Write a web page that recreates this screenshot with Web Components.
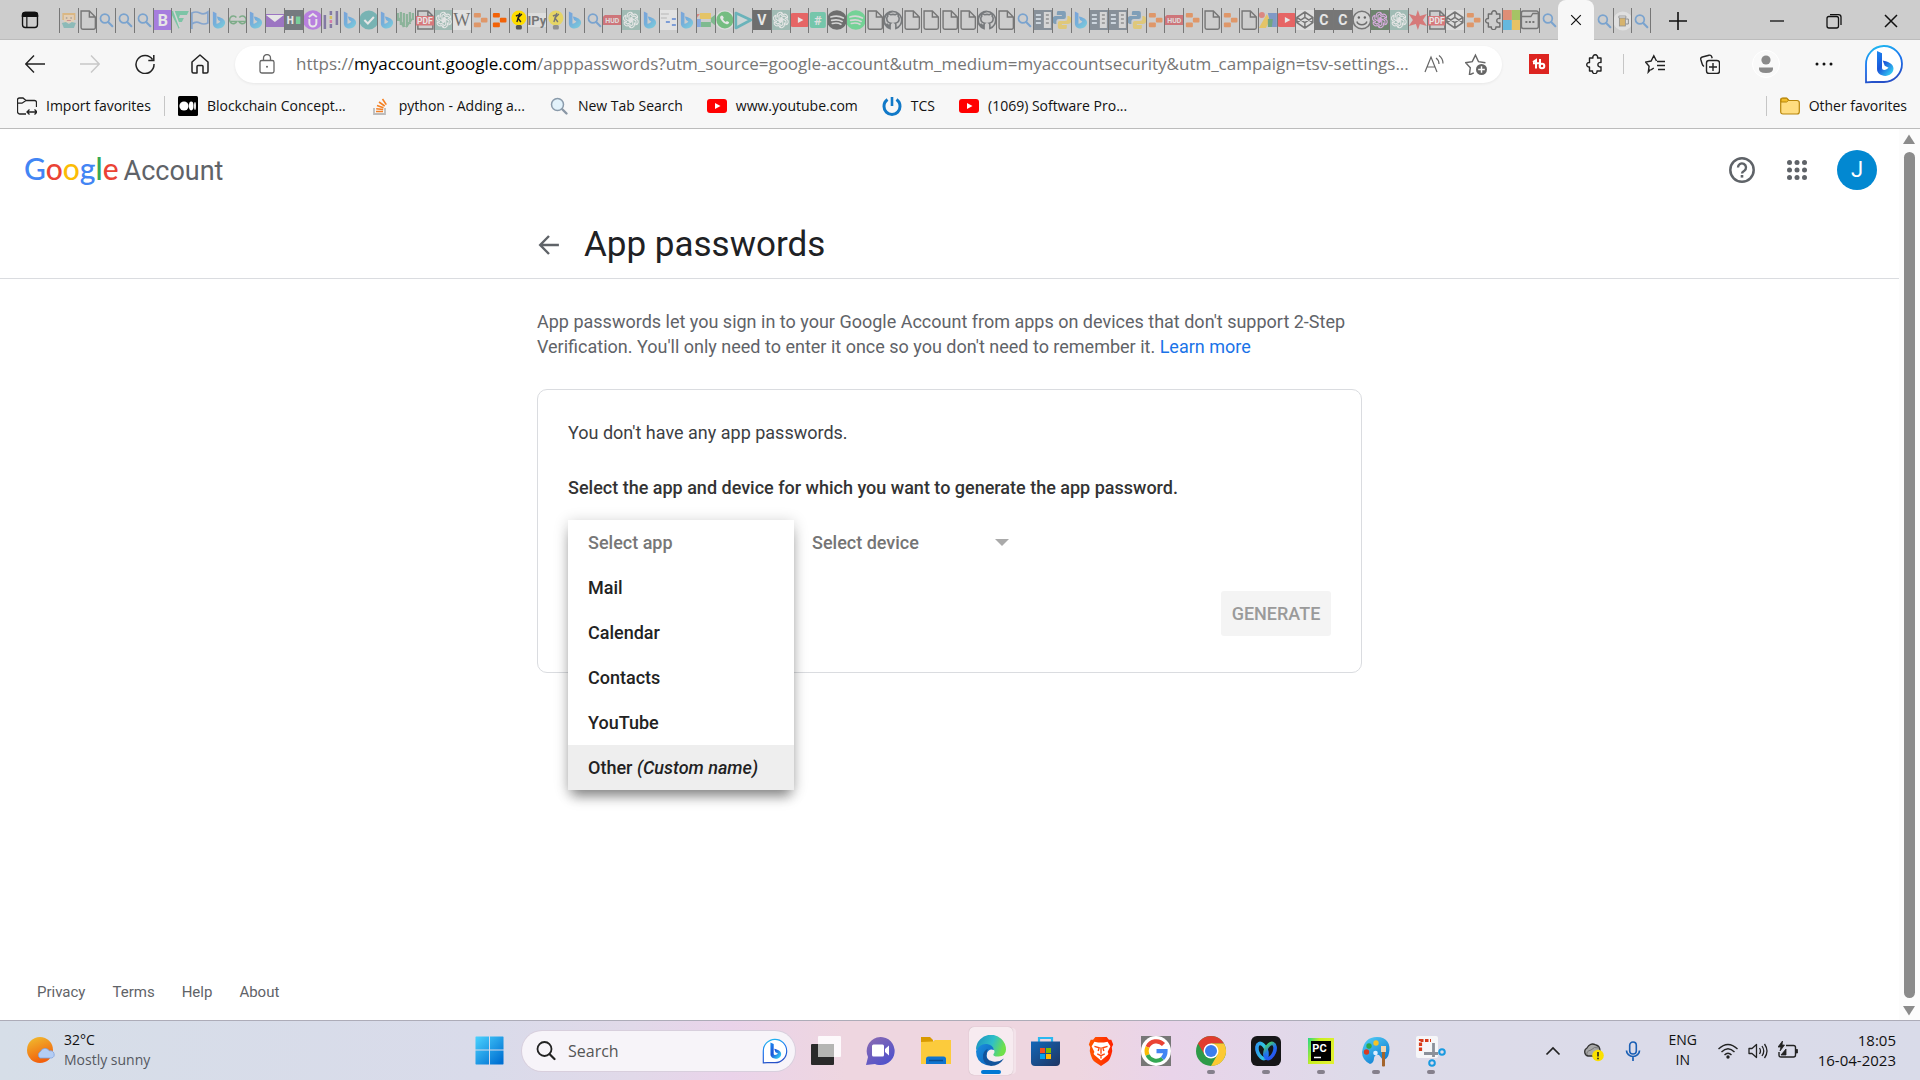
<!DOCTYPE html>
<html lang="en">
<head>
<meta charset="utf-8">
<title>App passwords</title>
<style>
html,body{margin:0;height:100%}
body{font-family:"Open Sans","Noto Sans",sans-serif;color:#111;background:#fff}
</style>
</head>
<body>
<desktop-screen></desktop-screen>
<script>
const rot = (n, cx, cy, s) => Array.from({length: n}, (_, i) => `<g transform="rotate(${i * 360 / n} ${cx} ${cy})">${s}</g>`).join('');
const knot = c => `<g fill="none" stroke="${c}" stroke-width="1.1">${rot(6, 10, 10, '<path d="M6.4 7.6V5.2a3 3 0 0 1 5.2-1.9l-3.5 2v4.6l2 1.2"/>')}</g>`;
const replit = c => `<g fill="${c}"><rect x="3" y="3" width="7" height="4.6" rx="1"/><rect x="10" y="7.8" width="6.6" height="4.6" rx="1"/><rect x="3" y="12.6" width="7" height="4.6" rx="1"/></g>`;
const label = (t, x, y, size, fill, w = 700) => `<text x="${x}" y="${y}" font-family="Roboto,sans-serif" font-size="${size}" font-weight="${w}" fill="${fill}" text-anchor="middle">${t}</text>`;
const bing = '<defs><linearGradient id="b" x2=".6" y2="1"><stop stop-color="#2b7de9"/><stop offset=".55" stop-color="#1f8fe8"/><stop offset="1" stop-color="#28c2ea"/></linearGradient></defs><path fill="url(#b)" d="M4 1.5l3.6 1.800v10.500c1.800-.5 3.200-1.400 3.900-2.400L9.200 9.900 7.900 6.400c4.400.8 8.300 2.700 8.300 6.200 0 3.200-3.100 5.900-6.500 5.900-3.200 0-5.700-2-5.700-5z"/>';
const tube = '<rect x="0" y="3" width="20" height="14" rx="3" fill="#f00"/><path d="M8 7l5.500 3L8 13z" fill="#fff"/>';
const bulb = '<circle cx="10" cy="8" r="7.5" fill="#fd0"/><rect x="7" y="15" width="6" height="4.5" rx="1.5" fill="#555"/><path d="M11 3L8 12M13 4L9 8l3 4M7 6l3-1" stroke="#222" stroke-width="1.4" fill="none"/>';
const spot = c => `<circle cx="10" cy="10" r="9.8" fill="${c}"/><path d="M4 7q7-2 12.500 1M4.800 10.400q6-1.600 10.500 1M5.500 13.500q5-1.300 8.500.8" stroke="#ddd" stroke-width="1.7" fill="none" stroke-linecap="round"/>`;
const bingBubble = '<defs><linearGradient id="r" x2=".3" y2="1"><stop stop-color="#22c4f0"/><stop offset=".5" stop-color="#1976f0"/><stop offset="1" stop-color="#2650c8"/></linearGradient><linearGradient id="c" y2="1" x2=".8"><stop stop-color="#1b8bf2"/><stop offset=".5" stop-color="#1b55d9"/><stop offset="1" stop-color="#35d2f4"/></linearGradient></defs><path d="M2 38.300V20.500A18 18 0 1 1 20 38H8q-3 0-6 .3z" fill="#fff" stroke="url(#r)" stroke-width="1.8"/><path fill="url(#c)" d="M13 7l5 2.300v14.500c0 2.500 2.400 2.800 4.600 1.500l2-1.500-3.900-2-2-5.300c5.600 1.100 10.800 3.500 10.800 8 0 4.300-3.800 7.400-8.200 7.400-4.700 0-8.300-2.700-8.300-6.800z"/>';
const puzzle = '<path d="M6 4h3a2.400 2.400 0 1 1 4.500 0H17v4.500a2.300 2.300 0 1 0 0 4.300V17h-4a2.300 2.300 0 1 1-4.500 0H5.500v-4a2.300 2.300 0 1 1 0-4.500V4z" fill="none" stroke="currentColor" stroke-width="1.4" stroke-linejoin="round"/>';
const mag = '<circle cx="9" cy="8.500" r="4.400" fill="none" stroke="#2a7bd0" stroke-width="1.7"/><path d="M12.300 12l4.200 4.300" stroke="#2a7bd0" stroke-width="2" stroke-linecap="round"/>';

/* name: [viewBox, markup] */
const F = s => ['0 0 20 20', s];
const ICONS = {
 person: F('<rect x="3.5" y="3" width="13" height="7" fill="#e8a33d"/><rect x="5" y="5" width="10" height="7.5" fill="#f7cfa0"/><path d="M7 8h1.500M11.500 8H13" stroke="#444"/><path d="M8 10.500h4" stroke="#c55"/><path d="M3 13l4-1 3 2 3-2 4 1-2 5H5z" fill="#4fa9a4"/>'),
 page: F('<path d="M3.200 1h8.300l6 6v10.500a1.700 1.700 0 0 1-1.700 1.700H4.900a1.700 1.700 0 0 1-1.700-1.700zM11.500 1v6h6" fill="none" stroke="#222" stroke-width="1.4"/>'),
 mag: F(mag),
 boot: F('<rect width="20" height="20" rx="2" fill="#8130f0"/>' + label('B', 10, 15.5, 16, '#fff')),
 green: F('<path d="M1 1h17l-2 4H9l-1 3h5l-2 4H8l1 4-1 3L1 5z" fill="#2dbd80"/><path d="M3 1l6 16" stroke="#ddd" stroke-width="1.5"/>'),
 flag: F('<path d="M2 19V3q4-2 8 0t8-1v11q-4 2-8 0t-8 1" fill="none" stroke="#3f7fd0" stroke-width="1.7"/>'),
 bing: F(bing),
 gfg: F('<path d="M8.500 7.500a3.800 3.800 0 1 0 .5 4H3M11.500 7.500a3.800 3.800 0 1 1-.5 4H17" fill="none" stroke="#2f8d46" stroke-width="1.5"/>'),
 mail: F('<rect x="0" y="4" width="20" height="13" fill="#6c20b8"/><path d="M1 5h18l-9 7z" fill="#fff"/>'),
 he: F('<rect width="20" height="20" fill="#1f2a33"/>' + label('H', 6.5, 14, 10, '#fff', 900) + '<rect x="12" y="6.5" width="4.5" height="7.5" fill="#2ad06a"/>'),
 ude: F('<circle cx="10" cy="10" r="9.8" fill="#a435f0"/><path d="M6.500 9v4a3.500 3.500 0 0 0 7 0V9M6 7l4-3 4 3" fill="none" stroke="#fff" stroke-width="2"/>'),
 bars: F('<path d="M4 5v14M16 1v14M10 1v4M10 14v4" stroke="#3b2a7a" stroke-width="2.5"/><path d="M10 6v3" stroke="#e0b400" stroke-width="2.5"/><path d="M10 10v3" stroke="#e0308a" stroke-width="2.5"/>'),
 check: F('<circle cx="10" cy="10" r="9.5" fill="#259b9a"/><path d="M5.500 10l3.500 3.500L15 7" fill="none" stroke="#fff" stroke-width="2"/>'),
 scrib: F('<path d="M2 3v8M5 2v13M8 3v14M11 4v13M14 2v12M17 3v7M3 8l5 9M10 17l6-8" stroke="#4d9a68" stroke-width="2.2"/>'),
 pdf: F('<path d="M3 1h10l5 5v13H3zM13 1v5h5" fill="none" stroke="#222" stroke-width="1.5"/><rect x="0" y="6" width="20" height="9.5" rx="1" fill="#e2252b"/>' + label('PDF', 10, 14, 8.5, '#fff')),
 ai: F('<rect width="20" height="20" rx="2" fill="#74aa9c"/>' + knot('#fff')),
 aip: F('<rect width="20" height="20" rx="2" fill="#123d12"/>' + knot('#e58af0')),
 wiki: F('<rect width="20" height="20" rx="1" fill="#f5f5f5"/><text x="10" y="15.5" text-anchor="middle" font-family="Liberation Serif,serif" font-size="18" fill="#111">W</text>'),
 repl: F(replit('#f26207')),
 bulb: F(bulb),
 ipy: F('<rect y="3" width="20" height="14" fill="#eee"/>' + label('IPy', 10, 15, 13, '#222')),
 hud: F('<path d="M3 5h17v10H0V8z" fill="#d0202a"/>' + label('HUD', 10.5, 12.8, 7, '#eee')),
 sheet: F('<rect width="20" height="20" fill="#f8f8f8"/><path d="M2 4h8M2 8h6" stroke="#ccc" stroke-width="2"/><path d="M13 9h4M7 12h4M13 15h4" stroke="#2f6fe0" stroke-width="1.8"/>'),
 meet: F('<path d="M0 9V4h4z" fill="#ea4335"/><path d="M4 3h11v6H4z" fill="#fbbc04"/><path d="M0 9h5v8H0z" fill="#4285f4"/><path d="M5 12h10v5H5zM15 8l5-4v12l-5-4z" fill="#34a853"/>'),
 wa: F('<circle cx="10" cy="10" r="9.8" fill="#eee"/><circle cx="10" cy="10" r="8.5" fill="#1faf38"/><path d="M6 6q1-1 2 0l1 2-1 1q1 2 3 3l1-1 2 1q1 1-1 2-3 1-6-3T6 6" fill="#fff"/>'),
 play: F('<path d="M3 3l15 7-15 8z" fill="#cdd" stroke="#0a9aa8" stroke-width="2.6" stroke-linejoin="round"/>'),
 vee: F('<rect width="20" height="20" fill="#111"/>' + label('V', 10, 15, 14, '#fff')),
 tube: F(tube),
 hash: F('<rect x="2" y="2" width="16" height="16" rx="2" fill="#20c08a"/>' + label('#', 10, 15, 13, '#eee')),
 spotd: F(spot('#111')), spotg: F(spot('#1ed760')),
 git: F('<path d="M10 1.500a8.700 8.700 0 0 0-3 16.900V15.500q-2.500.4-3.300-1.800" fill="none" stroke="#24292e" stroke-width="2"/><path d="M10 1.500a8.700 8.700 0 0 1 3 16.900V15q0-1.300-.7-1.800 4-.5 4-4.600 0-1.500-1-2.500.3-1.300-.2-2.400-1.300 0-2.600 1-2.300-.6-4.800 0-1.300-1-2.600-1-.5 1.100-.2 2.400-1 1-1 2.500 0 4.100 4 4.600-.7.500-.7 1.800" fill="none" stroke="#24292e" stroke-width="1.6"/>'),
 news: F('<rect width="20" height="20" fill="#445566"/><rect x="11" y="2" width="7" height="16" fill="#ddd"/><path d="M3 5h5M3 9h5M3 13h5" stroke="#cde" stroke-width="2"/><path d="M13 5h3M13 9h3M13 13h3" stroke="#555" stroke-width="1.5"/>'),
 py: F('<path d="M6 1h6q2 0 2 2v4q0 2-2 2H7q-2.500 0-2.500 2.500V14H3q-3-1-2.500-5Q1 6 4 6h6V5H5V3q0-2 1-2z" fill="#3572a5"/><path d="M14 19H8q-2 0-2-2v-4q0-2 2-2h5q2.500 0 2.500-2.500V6H17q3 1 2.500 5-.5 3-3.500 3h-6v1h5v2q0 2-1 2z" fill="#f2c52a"/>'),
 ads: F('<circle cx="4" cy="5" r="3" fill="#ea4335"/><path d="M9 4l3 6-4 8H1z" fill="#fbbc04"/><path d="M10 3h9v14h-6z" fill="#3566c0"/><path d="M10 9h5l-1 8h-4z" fill="#188038"/>'),
 pen: F('<rect width="20" height="20" fill="#eee"/><path d="M10 2l8 5.300v5.400L10 18l-8-5.300V7.300zM10 2v5.300M10 18v-5.300M2 7.300l8 5.400 8-5.400M2 12.700l8-5.400 8 5.400" fill="none" stroke="#222" stroke-width="1.5" stroke-linejoin="round"/>'),
 cee: F('<rect width="20" height="20" fill="#222"/>' + label('C', 10, 15, 14, '#fff')),
 smile: F('<circle cx="10" cy="10" r="8.8" fill="#ddd" stroke="#222" stroke-width="1.5"/><circle cx="7" cy="7.5" r="1.2"/><circle cx="13" cy="7.5" r="1.2"/><path d="M5 11.500a5.200 4.500 0 0 0 10 0" fill="none" stroke="#111" stroke-width="1.5"/>'),
 star: F('<path d="M10 0l2 6 7-2-4 6 4 6-7-2-2 6-2-6-7 2 4-6-4-6 7 2z" fill="#e02828"/>'),
 puzzle: F(puzzle),
 ms: F('<path d="M0 0h10v10H0z" fill="#f25022"/><path d="M10 0h10v10H10z" fill="#7fba00"/><path d="M0 10h10v10H0z" fill="#00a4ef"/><path d="M10 10h10v10H10z" fill="#ffb900"/>'),
 win: F('<rect x="1.5" y="1" width="17" height="17.5" rx="2" fill="none" stroke="#222" stroke-width="1.5"/><path d="M2 6.500h9l2-3h5" fill="none" stroke="#222" stroke-width="1.3"/><path d="M5.500 12h2M9 12h2M12.500 12h2" stroke="#222" stroke-width="1.8"/>'),
 beer: F('<circle cx="10" cy="10" r="9.5" fill="#f2f2f2"/><rect x="6.5" y="6.5" width="6" height="8.5" fill="#e09a10" stroke="#555" stroke-width=".8"/><path d="M6 5h7v2H6z" fill="#fff" stroke="#555" stroke-width=".8"/><path d="M13 8h2.500v5H13" fill="none" stroke="#555"/>'),
 tabs: F('<rect x="1.7" y="1.7" width="16.6" height="16.6" rx="3" fill="none" stroke="#111" stroke-width="1.5"/><path d="M1.500 6V4.500a3 3 0 0 1 3-3h11a3 3 0 0 1 3 3V6zM6.500 6v12" stroke="#111" stroke-width="1.3" fill="#111"/>'),
 x: F('<path d="M4 4l12 12M16 4L4 16" stroke="currentColor" stroke-width="1.5"/>'),
 plus: F('<path d="M10 1v18M1 10h18" stroke="currentColor" stroke-width="1.6"/>'),
 min: F('<path d="M3 10h14" stroke="#111" stroke-width="1.3"/>'),
 restore: F('<rect x="3" y="5.5" width="11.5" height="11.5" rx="2" fill="none" stroke="#111" stroke-width="1.3"/><path d="M6 3.600h8.500a2.500 2.500 0 0 1 2.500 2.500V14" fill="none" stroke="#111" stroke-width="1.3"/>'),
 back: F('<path d="M20 10H1M9 1.500L.8 10 9 18.500" fill="none" stroke="currentColor" stroke-width="1.4"/>'),
 fwd: F('<path d="M0 10h19M11 1.500l8.200 8.500-8.200 8.500" fill="none" stroke="currentColor" stroke-width="1.4"/>'),
 reload: F('<path d="M17.500 5.500A9 9 0 1 0 19 10M18.800 1v5.500h-5.500" fill="none" stroke="currentColor" stroke-width="1.5"/>'),
 home: F('<path d="M2 8l8-7 8 7v9.500a1.500 1.500 0 0 1-1.500 1.500H13v-6.500a1 1 0 0 0-1-1H8a1 1 0 0 0-1 1V19H3.500A1.500 1.500 0 0 1 2 17.500z" fill="none" stroke="currentColor" stroke-width="1.5" stroke-linejoin="round"/>'),
 lock: F('<rect x="3" y="6.5" width="14" height="12.5" rx="1.8" fill="none" stroke="#666" stroke-width="1.3"/><path d="M6.500 6.500V4a3.500 3.500 0 0 1 7 0v2.500" fill="none" stroke="#666" stroke-width="1.3"/><circle cx="10" cy="12.7" r="1" fill="#666"/>'),
 read: F('<path d="M1 18L7 3l6 15M3 13h8M12 4q3 2 3 6M15 1.500q4 3 4 8" fill="none" stroke="#666" stroke-width="1.2"/>'),
 favadd: F('<path d="M8 18l-4 2 .8-6.500L.6 8.800l6-.9L9.500 2l2.800 5.900 6.300.9" fill="none" stroke="#666" stroke-width="1.3"/><circle cx="15" cy="15" r="5" fill="#666"/><path d="M15 12v6M12 15h6" stroke="#fff" stroke-width="1.3"/>'),
 tb: F('<rect width="20" height="20" fill="#dd2420"/><path d="M4 8l3-2v8.500M4 9.200h6.500M11 5v7.500" stroke="#fff" stroke-width="2" fill="none"/><circle cx="13" cy="12" r="2.3" fill="none" stroke="#fff" stroke-width="2"/>'),
 favlist: F('<path d="M5.500 15.500L3.300 18l.8-5.800L.5 8l5.600-1L8.800 1.800 11.500 7M6 15.800L8.800 14M12 7.500h8M12 11.500h8M13 15.500h7" fill="none" stroke="currentColor" stroke-width="1.4"/>'),
 coll: F('<rect x="6.5" y="6.5" width="13" height="13" rx="2.5" fill="none" stroke="currentColor" stroke-width="1.4"/><path d="M13 9v8M9 13h8M4 12.500Q2.500 11.500 2 9.500L.8 5.500Q.3 3.500 2.300 3L9 1.200q2-.5 2.600 1.300l.6 1.800" fill="none" stroke="currentColor" stroke-width="1.4"/>'),
 user: ['0 0 28 28', '<circle cx="14" cy="14" r="13.5" fill="#f9f9f9" stroke="#fff"/><circle cx="14" cy="10" r="4.6" fill="#8a8a8a"/><path d="M7 17.500h14q.8 5.500-7 5.500t-7-5.500z" fill="#8a8a8a"/>'],
 dots: F('<g fill="#111"><circle cx="3" cy="10" r="1.5"/><circle cx="10" cy="10" r="1.5"/><circle cx="17" cy="10" r="1.5"/></g>'),
 bubble: ['0 0 40 40', bingBubble],
 imp: F('<path d="M9 18H3a2.500 2.500 0 0 1-2.500-2.500V4Q.5 2 2.500 2H6l3 2.500h8.500q2 0 2 2V11M.5 7.200H5L9 4.500M10 16h10M12.500 13.500L10 16l2.500 2.500M17.500 13.500L20 16l-2.500 2.500" fill="none" stroke="#222" stroke-width="1.3"/>'),
 medium: F('<rect width="20" height="20" rx="1.5"/><circle cx="6" cy="10" r="4.6" fill="#fff"/><ellipse cx="13.2" cy="10" rx="2.3" ry="4.4" fill="#fff"/><ellipse cx="17" cy="10" rx=".9" ry="4" fill="#fff"/>'),
 so: F('<path d="M4 12v6h11v-6" fill="none" stroke="#bcbbbb" stroke-width="1.8"/><path d="M6 15.500h7M6.200 12.800l7 .7M7 9.500l6.500 2.200M9 6l5.700 4M12.500 3l3.800 5.600" stroke="#f48024" stroke-width="1.6"/>'),
 newtab: F('<path d="M12.500 12.500l5 5" stroke="#8a97a5" stroke-width="2.4" stroke-linecap="round"/><circle cx="8.5" cy="8.5" r="6" fill="#e2f2fb" stroke="#8a9bab" stroke-width="1.5"/>'),
 tcs: F('<path d="M5.500 3.500A8.200 8.200 0 0 0 2 10.500a8 8 0 0 0 16 0 8.200 8.200 0 0 0-3.500-7" fill="none" stroke="#1179c8" stroke-width="3"/><path d="M10 1v9" stroke="#1179c8" stroke-width="2.6"/>'),
 folder: F('<path d="M.7 4q0-2 2-2h4L9 4.500h8q2.300 0 2.300 2.200v9q0 2.300-2.300 2.300H3q-2.300 0-2.300-2.300z" fill="#ffdd80" stroke="#b8860b" stroke-width="1.2"/><path d="M1 6V4q0-1.700 1.700-1.700H6.500L8.500 4.500 6.500 6z" fill="#f2bd2a" stroke="#b8860b"/>'),
 arrow: F('<path d="M19 10H2.500M10 1.800L2 10l8 8.200" fill="none" stroke="#5f6368" stroke-width="2.2"/>'),
 help: ['0 0 26 26', '<circle cx="13" cy="13" r="11.7" fill="none" stroke="#5f6368" stroke-width="2.5"/><path d="M9 10.500a4 4 0 1 1 6.300 3.200Q13 15 13 16.500" fill="none" stroke="#5f6368" stroke-width="2.4"/><rect x="11.7" y="18" width="2.6" height="2.6" fill="#5f6368"/>'],
 grid: F('<g fill="#5f6368">' + [2.5, 10, 17.5].map(y => [2.5, 10, 17.5].map(x => `<circle cx="${x}" cy="${y}" r="2.5"/>`).join('')).join('') + '</g>'),
 weather: ['0 0 28 28', '<defs><linearGradient id="s" x2=".4" y2="1"><stop stop-color="#f0c030"/><stop offset="1" stop-color="#f2600c"/></linearGradient></defs><circle cx="13" cy="13" r="13" fill="url(#s)"/><path d="M13 21a3.800 3.800 0 0 1 .5-6.500 5 5 0 0 1 9-.5 3.600 3.600 0 0 1 2 7z" fill="#b4cdf4" stroke="#7fa3e0" stroke-width=".8"/>'],
 start: ['0 0 30 30', '<defs><linearGradient id="v" gradientUnits="userSpaceOnUse" x1="0" y1="0" x2="26" y2="28"><stop stop-color="#4cd4ff"/><stop offset="1" stop-color="#0070d2"/></linearGradient></defs><path d="M1 .5h13.500V14H.5V1zM15.500.5H29L29.500 1v13h-14zM.5 15h14v14.500H1L.5 29zM15.500 15h14v14l-.5.5H15.500z" fill="url(#v)"/>'],
 search: F('<circle cx="8.500" cy="8" r="7" fill="none" stroke="#222" stroke-width="1.8"/><path d="M13.500 13l5 5" stroke="#222" stroke-width="2.2" stroke-linecap="round"/>'),
 task: ['0 0 32 32', '<rect x="1" y="9" width="23" height="21" rx="1" fill="#2a2a2a"/><rect x="8" y="1" width="23" height="21" rx="1" fill="#fff" opacity=".85"/><rect x="8" y="9" width="16" height="13" fill="#b5b5b3"/>'],
 chat: ['0 0 32 32', '<defs><linearGradient id="t" y2="1" x2=".7"><stop stop-color="#8d6bb0"/><stop offset="1" stop-color="#4f52cc"/></linearGradient></defs><path d="M1 30l2-8A14 14 0 1 1 15 30q-3 .3-5-1z" fill="url(#t)"/><rect x="7" y="9.500" width="12" height="12" rx="1.5" fill="#fff"/><path d="M20 14l4-3.500v10L20 17z" fill="#fff"/>'],
 files: ['0 0 32 32', '<path d="M1 2h9l3 3v5H1z" fill="#d99a00"/><path d="M1 7l12-.5 2-1.500h16v24H1z" fill="#fccb3c"/><path d="M6 29v-5q0-2.500 2.500-2.500h15Q26 21.500 26 24v5z" fill="#0f74cf"/><path d="M9 25.500h14" stroke="#0a4d8f" stroke-width="1.5"/>'],
 edge: ['0 0 32 32', '<defs><linearGradient id="e" x2="1" y2=".3"><stop stop-color="#1b8fc0"/><stop offset=".6" stop-color="#2fbfc8"/><stop offset="1" stop-color="#6fe04a"/></linearGradient><linearGradient id="f" y2="1"><stop stop-color="#1c8fe0"/><stop offset="1" stop-color="#0a5fb8"/></linearGradient></defs><path d="M1 15A15 15 0 0 1 31 14.500q0 6.500-7.500 7-6 .3-5-2.500 2-2 0-5Q13 7 1 15z" fill="url(#e)"/><path d="M1 16Q5 8 12 9q6 1 7 6-5-2-7 3-2 7 6 11-3 2-7 1Q1 27 1 16z" fill="url(#f)"/><path d="M12 17q-3 8 6 9.500 6 1 11-3Q24 31 16 31 7 29 8 20q1-5 5-6-1 1-1 3z" fill="#12539c"/>'],
 store: ['0 0 32 32', '<defs><linearGradient id="m" y2="1"><stop stop-color="#1267b8"/><stop offset="1" stop-color="#1f3562"/></linearGradient></defs><path d="M9 8V3h13v5" fill="none" stroke="#2ab8f0" stroke-width="2.2"/><path d="M1 6.500h29V27q0 4-4 4H5q-4 0-4-4z" fill="url(#m)"/><path d="M10 13h5v5h-5z" fill="#f25022"/><path d="M16 13h5v5h-5z" fill="#7fba00"/><path d="M10 19h5v5h-5z" fill="#00a4ef"/><path d="M16 19h5v5h-5z" fill="#ffb900"/>'],
 brave: ['0 0 32 32', '<defs><linearGradient id="l" x2="1"><stop stop-color="#ff5a00"/><stop offset="1" stop-color="#ff2000"/></linearGradient></defs><path d="M10 1h12l2.500 3H27l2 5-1.500 3L28 16q-2 10-6 12l-6 4-6-4q-4-2-6-12l.5-4L3 9l2-5h2.500z" fill="url(#l)"/><path d="M9 6l4 1h6l4-1 3 5-3 6q2 2-1 4l-6 5-6-5q-3-2-1-4l-3-6z" fill="#fff"/><path d="M9 11l5 1.500-1 3.500M23 11l-5 1.500 1 3.500M16 12v7M12 19l4 2 4-2M16 21v3" fill="none" stroke="#ff4a10" stroke-width="1.5"/>'],
 goog: ['0 0 32 32', '<rect x="1" y="1" width="30" height="30" fill="#777"/><circle cx="16" cy="16" r="15" fill="#fff"/><g fill="none" stroke-width="4.2"><path d="M23.500 9.500A9.700 9.700 0 0 0 7.500 12" stroke="#ea4335"/><path d="M7.500 12a9.700 9.700 0 0 0 0 8" stroke="#fbbc05"/><path d="M7.500 20a9.700 9.700 0 0 0 15 3.500" stroke="#34a853"/><path d="M22.500 23.500q3-3 3-7.300H16.500" stroke="#4285f4"/></g>'],
 chrome: ['0 0 32 32', '<circle cx="16" cy="16" r="15" fill="#2e9a48"/><path d="M3 8.500A15 15 0 0 1 29 8.500H16L9.500 19.500z" fill="#e03c2e"/><path d="M29 8.500A15 15 0 0 1 16 31L22.500 19.500 16 8.500z" fill="#fcc934"/><circle cx="16" cy="16" r="7.5" fill="#fff"/><circle cx="16" cy="16" r="6" fill="#3b7ded"/>'],
 webex: ['0 0 32 32', '<defs><linearGradient id="x" y2="1"><stop stop-color="#2f8cf0"/><stop offset=".6" stop-color="#30c8e0"/><stop offset="1" stop-color="#1a5cf0"/></linearGradient><linearGradient id="y" y2="1"><stop stop-color="#4ad860"/><stop offset=".5" stop-color="#1f6cf0"/><stop offset="1" stop-color="#2a50f0"/></linearGradient></defs><rect x="1" y="1" width="30" height="30" rx="6" fill="#161618"/><g fill="none" stroke-width="3.6"><ellipse cx="12" cy="16" rx="4.500" ry="8" transform="rotate(-22 12 16)" stroke="url(#x)"/><ellipse cx="20" cy="16" rx="4.500" ry="8" transform="rotate(22 20 16)" stroke="url(#y)"/></g>'],
 pc: ['0 0 32 32', '<defs><linearGradient id="p" x2="1" y2=".4"><stop stop-color="#21d789"/><stop offset=".4" stop-color="#c8ee20"/><stop offset="1" stop-color="#e0f030"/></linearGradient></defs><rect x="3" y="3" width="26" height="26" fill="url(#p)"/><rect x="6" y="6" width="20" height="20"/>' + label('PC', 14.5, 17, 11, '#fff') + '<path d="M9 22.500h7" stroke="#fff" stroke-width="1.5"/>'],
 paint: ['0 0 32 32', '<defs><linearGradient id="a" x2=".7" y2="1"><stop stop-color="#55d2f8"/><stop offset="1" stop-color="#0f7ad0"/></linearGradient></defs><path d="M17 2C27 2 31 9 29 18q-1 6-6 7l-4-5q-4-1-5 3 0 5-4 6-8-4-8-12Q4 2 17 2z" fill="url(#a)"/><circle cx="16" cy="8" r="2.7" fill="#f5c326"/><circle cx="9" cy="11" r="2.7" fill="#2ba84a"/><circle cx="6.5" cy="17" r="2.7" fill="#d83b20"/><circle cx="15.5" cy="18" r="2.3" fill="#def"/><path d="M21 11h5v6h-5z" fill="#f0d5b0"/><path d="M22 17h3v14q-1.500 1-3 0z" fill="#a4652c"/>'],
 snip: ['0 0 32 32', '<rect x="1" y="1" width="22" height="22" rx="2" fill="#f6f6f8"/><path d="M5.500 16V5.500H16" fill="none" stroke="#d83b1a" stroke-width="3.2" stroke-dasharray="3.500 1.500"/><path d="M9 18.500h14M18.500 8v14" stroke="#8b9099" stroke-width="2.8"/><circle cx="27" cy="17" r="2.8" fill="none" stroke="#1a9ae0" stroke-width="2"/><circle cx="17" cy="28" r="2.8" fill="none" stroke="#1a9ae0" stroke-width="2"/>'],
 chev: F('<path d="M3.500 13.500L10 7l6.500 6.500" fill="none" stroke="#222" stroke-width="1.7"/>'),
 cloud: ['0 0 22 22', '<path d="M6 16a4.300 4.300 0 0 1-1-8Q8 2 14 5q4 1 4 6v5z" fill="#a8a8a8" stroke="#333" stroke-width="1.3"/><path d="M5 15q-1-4 4-5 3-4 8-2" stroke="#777" fill="none"/><circle cx="16" cy="15.5" r="5.8" fill="#fbe100"/><path d="M16 12v4.500M16 17.800v1.500" stroke="#222" stroke-width="1.6"/>'],
 mic: F('<rect x="6.7" y="1" width="6.6" height="12" rx="3.3" fill="none" stroke="#1a5fb4" stroke-width="1.6"/><path d="M3.500 9.500a6.500 6 0 0 0 13 0M10 16v4" fill="none" stroke="#1a5fb4" stroke-width="1.7"/>'),
 wifi: F('<g fill="none" stroke="#222" stroke-width="1.4"><path d="M.5 8Q10-1 19.500 8M3.500 11Q10 4.500 16.500 11M6.500 14Q10 10.500 13.500 14"/></g><circle cx="10" cy="16" r="1.7" fill="#222"/>'),
 vol: F('<path d="M1 7.500h3L8.500 3.500v13L4 12.500H1z" fill="none" stroke="#222" stroke-width="1.3" stroke-linejoin="round"/><path d="M11.500 7q2 3 0 6M14 5q3.500 5 0 10M16.500 3q5 7 0 14" fill="none" stroke="#222" stroke-width="1.3"/>'),
 batt: F('<path d="M8 4.500h7.500q2 0 2 2v7.500q0 2-2 2H3q-2 0-2-2V11" fill="none" stroke="#222" stroke-width="1.4"/><path d="M18 8.500h1.500v3.500H18zM3 14L8 8v6zM4.500 0L0 6h3l-1 4 4.500-6H4z" fill="#222" stroke="#222" stroke-width=".8"/>'),
 caret: ['0 0 14 7', '<path d="M0 0h14L7 7z" fill="#aaa"/>'],
 up: ['0 0 12 10', '<path d="M6 .5L12 10H0z" fill="#8b8b8b"/>'],
 down: ['0 0 12 10', '<path d="M6 9.500L12 0H0z" fill="#8b8b8b"/>']
};

const define = (name, html, after) => {
  const t = document.createElement('template');
  t.innerHTML = html;
  customElements.define(name, class extends HTMLElement {
    connectedCallback() {
      if (this.shadowRoot) return;
      const root = this.attachShadow({mode: 'open'});
      root.append(t.content.cloneNode(true));
      if (after) after(this, root);
    }
  });
};

define('ui-icon', `<style>:host{display:block;width:20px;height:20px;flex:none}svg{display:block;width:100%;height:100%}</style><svg aria-hidden="true"></svg>`, (el, root) => {
  const [box, body] = ICONS[el.getAttribute('name')];
  const svg = root.querySelector('svg');
  svg.setAttribute('viewBox', box);
  if (el.hasAttribute('fill')) svg.setAttribute('preserveAspectRatio', 'xMidYMid slice');
  svg.innerHTML = body;
});

define('icon-button', `<style>:host{display:block;flex:none;width:55px}
button{all:unset;display:flex;align-items:center;justify-content:center;width:100%;height:100%;cursor:default}</style>
<button><slot></slot></button>`, (el, root) => root.querySelector('button').setAttribute('aria-label', el.getAttribute('label') || ''));

define('browser-tab', `<style>:host{display:flex;flex:1 1 0;min-width:0;box-sizing:border-box;border-left:1px solid var(--line,#777);height:25px}
button{all:unset;display:flex;align-items:center;flex:1;min-width:0;overflow:hidden;opacity:.5}
:host([awake]) button{opacity:1}
ui-icon{width:100%;height:20px;flex:1}</style><button></button>`, (el, root) => {
  root.querySelector('button').innerHTML = `<ui-icon fill name="${el.getAttribute('icon')}"></ui-icon>`;
});

define('tab-strip', `<style>:host{display:flex;align-items:flex-end;height:40px;background:#cdcdcd;box-sizing:border-box;box-shadow:inset 0 -1px #bcbcbc}
.menu{width:59px;height:40px}
.tabs{display:flex;min-width:0;align-items:center;height:40px}
.before{flex:80}.after{flex:3;border-right:1px solid #777;height:25px;margin-bottom:7px}
.active{all:unset;width:36px;height:40px;background:#f7f7f7;border-radius:8px 8px 0 0;display:flex;align-items:center;justify-content:center}
.active ui-icon{width:16px;height:16px}
.new{width:53px;height:38px}.gap{width:44px}.win{display:flex;height:38px;margin-right:1px}
.win icon-button{width:57px}
.after browser-tab:first-child{--line:transparent}</style>
<icon-button class="menu" label="Tab actions"><ui-icon name="tabs" style="width:18px;height:18px"></ui-icon></icon-button>
<div class="tabs before"></div>
<button class="active" aria-label="Close tab"><ui-icon name="x"></ui-icon></button>
<div class="tabs after"><browser-tab icon="mag"></browser-tab><browser-tab icon="beer"></browser-tab><browser-tab icon="mag"></browser-tab></div>
<icon-button class="new" label="New tab"><ui-icon name="plus"></ui-icon></icon-button>
<div class="gap"></div>
<div class="win"><icon-button label="Minimize"><ui-icon name="min"></ui-icon></icon-button><icon-button label="Restore"><ui-icon name="restore"></ui-icon></icon-button><icon-button label="Close"><ui-icon name="x"></ui-icon></icon-button></div>`, (el, root) => {
  const names = 'person page mag mag mag boot green flag bing gfg bing mail he ude bars bing check bing scrib pdf ai wiki repl repl! bulb! ipy bulb bing mag hud ai bing sheet bing meet wa play vee ai tube hash spotd spotg page git page page page page git page mag news py bing news news py repl hud repl page repl page ads tube pen cee cee smile aip ai star pdf pen repl puzzle ms win mag'.split(' ');
  root.querySelector('.before').innerHTML = names.map(n => `<browser-tab icon="${n.replace('!', '')}"${n.endsWith('!') ? ' awake' : ''}></browser-tab>`).join('');
});

define('tool-bar', `<style>:host{display:flex;align-items:center;height:48px;padding:0 5px 0 7px;background:#f7f7f7}
icon-button{height:40px;color:#222}.off{color:#c8c8c8}.wide{width:58px}.last{width:62px}
.address{flex:1;min-width:0;margin:0 9px 0 8px;height:37px;border-radius:19px;background:#fff;box-shadow:0 1px 3px #0001;display:flex;align-items:center;padding:0 5px 0 22px;box-sizing:border-box}
.url{flex:1;min-width:0;margin-left:19px;white-space:nowrap;font-size:17px;line-height:24px;color:#767676;outline:0}
.url b{font-weight:400;color:#000}
.tools{display:flex}.tools icon-button{width:42px}
.rule{width:1px;height:20px;background:#c6c6c6;margin:0 3px 0 2px}</style>
<icon-button label="Back"><ui-icon name="back"></ui-icon></icon-button>
<icon-button label="Forward" class="off"><ui-icon name="fwd"></ui-icon></icon-button>
<icon-button label="Refresh"><ui-icon name="reload"></ui-icon></icon-button>
<icon-button label="Home"><ui-icon name="home"></ui-icon></icon-button>
<div class="address"><ui-icon name="lock"></ui-icon>
<div class="url" role="textbox" aria-label="Address" contenteditable="true" spellcheck="false">https://<b>myaccount.google.com</b>/apppasswords?utm_source=google-account&amp;utm_medium=myaccountsecurity&amp;utm_campaign=tsv-settings...</div>
<div class="tools"><icon-button label="Read aloud"><ui-icon name="read"></ui-icon></icon-button><icon-button label="Add to favorites"><ui-icon name="favadd" style="width:22px;height:22px"></ui-icon></icon-button></div></div>
<icon-button label="Extension"><ui-icon name="tb"></ui-icon></icon-button>
<icon-button label="Extensions"><ui-icon name="puzzle"></ui-icon></icon-button>
<div class="rule"></div>
<icon-button label="Favorites"><ui-icon name="favlist"></ui-icon></icon-button>
<icon-button label="Collections"><ui-icon name="coll"></ui-icon></icon-button>
<icon-button class="wide" label="Profile"><ui-icon name="user" style="width:28px;height:28px"></ui-icon></icon-button>
<icon-button class="wide" label="Settings and more"><ui-icon name="dots"></ui-icon></icon-button>
<icon-button class="last" label="Bing"><ui-icon name="bubble" style="width:40px;height:40px"></ui-icon></icon-button>`);

define('favorite-link', `<style>:host{display:block;flex:none}a{display:flex;align-items:center;gap:9px;color:#111;text-decoration:none;font-size:14px;line-height:20px;white-space:nowrap}</style>
<a href="#"><slot></slot></a>`, (el, root) => {
  const icon = document.createElement('ui-icon');
  icon.setAttribute('name', el.getAttribute('icon'));
  root.querySelector('a').prepend(icon);
});

define('favorites-bar', `<style>:host{display:flex;align-items:center;height:41px;padding:0 13px 4px 17px;background:#f7f7f7;border-bottom:1px solid #bcbcbc;gap:24px;box-sizing:border-box}
.rule{width:1px;height:20px;background:#c6c6c6;margin:0 -11px}.grow{flex:1}</style>
<favorite-link icon="imp">Import favorites</favorite-link><div class="rule"></div>
<favorite-link icon="medium">Blockchain Concept...</favorite-link>
<favorite-link icon="so">python - Adding a...</favorite-link>
<favorite-link icon="newtab">New Tab Search</favorite-link>
<favorite-link icon="tube">www.youtube.com</favorite-link>
<favorite-link icon="tcs">TCS</favorite-link>
<favorite-link icon="tube">(1069) Software Pro...</favorite-link>
<div class="grow"></div><div class="rule"></div>
<favorite-link icon="folder">Other favorites</favorite-link>`);

define('account-header', `<style>:host{display:block;border-bottom:1px solid #dadce0}
.top{display:flex;align-items:center;height:81px;padding:0 22px 0 24px}
.logo{display:flex;align-items:baseline;gap:5px;text-decoration:none;font:27px/36px Roboto,sans-serif;color:#5f6368;flex:1}
.g{font:500 30px/36px Lato,sans-serif}
.b{color:#4285f4}.r{color:#ea4335}.y{color:#fbbc05}.n{color:#34a853}
.avatar{all:unset;width:40px;height:40px;border-radius:50%;background:#0288d1;color:#fff;font:22px/40px Roboto,sans-serif;text-align:center;margin-left:13px}
.title{display:flex;align-items:center;gap:23px;max-width:825px;height:68px;margin:0 auto;padding-top:2px;box-sizing:border-box}
.title icon-button{width:24px;height:24px}
h1{margin:0;font:400 35px/44px Roboto,sans-serif;color:#202124}</style>
<div class="top"><a class="logo" href="#"><span class="g"><span class="b">G</span><span class="r">o</span><span class="y">o</span><span class="b">g</span><span class="n">l</span><span class="r">e</span></span><span>Account</span></a>
<icon-button label="Help"><ui-icon name="help" style="width:26px;height:26px"></ui-icon></icon-button>
<icon-button label="Google apps"><ui-icon name="grid"></ui-icon></icon-button>
<button class="avatar">J</button></div>
<div class="title"><icon-button label="Back"><ui-icon name="arrow" style="width:22px;height:22px"></ui-icon></icon-button><h1>App passwords</h1></div>`);

define('app-menu', `<style>:host{display:block;position:relative;width:226px;height:45px}
ul{position:absolute;top:0;left:0;right:0;margin:0;padding:0;list-style:none;background:#fff;box-shadow:0 10px 12px -4px #0006,0 2px 14px #0003}
button{all:unset;display:block;width:100%;box-sizing:border-box;padding:0 20px;font:500 18px/45px Roboto,sans-serif;color:#222;white-space:nowrap}
.hint{color:#777}.on{background:#eee}</style>
<ul role="listbox" aria-label="Select app"><li><button class="hint">Select app</button></li><li><button>Mail</button></li><li><button>Calendar</button></li><li><button>Contacts</button></li><li><button>YouTube</button></li><li><button class="on">Other <i>(Custom name)</i></button></li></ul>`);

define('device-select', `<style>:host{display:grid;align-items:center;width:197px}
select,ui-icon{grid-area:1/1}
select{appearance:none;border:0;background:none;padding:0;margin:0;font:500 18px/24px Roboto,sans-serif;color:#757575;width:100%}
ui-icon{justify-self:end;width:14px;height:7px;pointer-events:none}</style>
<select aria-label="Select device"><option>Select device</option></select><ui-icon name="caret"></ui-icon>`);

define('password-card', `<style>:host{display:block;border:1px solid #dadce0;border-radius:10px;padding:30px 30px 36px;font:18px/25px Roboto,sans-serif;color:#3c4043}
p{margin:0 0 30px}.strong{font-weight:500;margin-bottom:20px;color:#333}
.row{display:flex;gap:18px;align-items:center;margin-bottom:26px}
.end{display:flex;justify-content:flex-end}
button{border:0;border-radius:3px;background:#f4f4f4;color:#9a9a9a;font:500 18px/45px Roboto,sans-serif;padding:0;width:110px}</style>
<p>You don't have any app passwords.</p>
<p class="strong">Select the app and device for which you want to generate the app password.</p>
<div class="row"><app-menu></app-menu><device-select></device-select></div>
<div class="end"><button disabled>GENERATE</button></div>`);

define('account-page', `<style>:host{display:flex;flex:1;min-height:0;background:#fff}
.view{flex:1;min-width:0;display:flex;flex-direction:column}
main{box-sizing:border-box;width:100%;max-width:825px;margin:30px auto 0;flex:1}
.intro{margin:0 0 30px;font:18px/25px Roboto,sans-serif;color:#5f6368}
a{color:#1a73e8;text-decoration:none}
footer{display:flex;gap:27px;padding:0 37px 18px;font:15px/20px Roboto,sans-serif}footer a{color:#5f6368}
.scroll{width:21px;display:flex;flex-direction:column;align-items:center;box-sizing:border-box;padding:5px 1px 4px 0;gap:8px;background:#fcfcfc}
.scroll ui-icon{width:12px;height:10px}.thumb{width:11px;flex:1;border-radius:6px;background:#8b8b8b}</style>
<div class="view"><account-header></account-header>
<main><p class="intro">App passwords let you sign in to your Google Account from apps on devices that don't support 2-Step Verification. You'll only need to enter it once so you don't need to remember it. <a href="#">Learn more</a></p>
<password-card></password-card></main>
<footer><a href="#">Privacy</a><a href="#">Terms</a><a href="#">Help</a><a href="#">About</a></footer></div>
<div class="scroll"><ui-icon name="up"></ui-icon><div class="thumb"></div><ui-icon name="down"></ui-icon></div>`);

define('task-button', `<style>:host{display:grid;flex:none;width:55px;height:59px}
button{all:unset;grid-area:1/1;display:flex;align-items:center;justify-content:center}
i{grid-area:1/1;place-self:end center;display:none;height:4px;width:8px;border-radius:2px;background:#85808c;margin-bottom:6px}
:host([running]) i{display:block}
:host([active]) i{display:block;width:20px;background:#0078d4}
:host([active]) button{place-self:center;width:44px;height:48px;border-radius:5px;background:#f7ebf0;box-shadow:0 0 1px #0004,4px 0 0 -1px #f7ebf099}</style><button><slot></slot></button><i></i>`, (el, root) => root.querySelector('button').setAttribute('aria-label', el.getAttribute('label')));

define('task-bar', `<style>:host{display:grid;grid-template-columns:1fr auto 1fr;align-items:center;height:60px;box-sizing:border-box;border-top:1px solid #adacb8;font-size:14px;line-height:20px;
background:linear-gradient(90deg,#d6dee8,#d9dbea 25%,#e1d9e9 33%,#ead3ea 38%,#eed6e0 44%,#eed6e0 56%,#e9d4ea 61%,#dddbe9 71%,#d9dbe9)}
.weather{display:flex;align-items:center;gap:9px;padding-left:27px}.weather ui-icon{width:28px;height:28px}.sub{color:#55585f}
.text{padding-bottom:2px}
.mid,.right{display:flex;align-items:center}.big{width:32px;height:32px}
label{display:flex;align-items:center;box-sizing:border-box;width:273px;height:40px;border-radius:20px;background:#f7f4f9;box-shadow:0 0 0 1px #d8cfdd;padding:0 7px 0 14px;margin:0 3px 0 5px;gap:12px}
input{all:unset;flex:1;min-width:0;font-size:16px}input::placeholder{color:#555}
.right{justify-content:flex-end;padding-right:24px}
.right icon-button{width:40px;height:40px}.right .thin{width:30px}
.lang{width:60px;text-align:center}.clock{text-align:right;margin-left:15px;min-width:78px;font-size:15px}</style>
<div class="weather"><ui-icon name="weather"></ui-icon><div class="text"><div>32°C</div><div class="sub">Mostly sunny</div></div></div>
<div class="mid"><task-button label="Start"><ui-icon name="start" style="width:29px;height:29px"></ui-icon></task-button>
<label><ui-icon name="search"></ui-icon><input aria-label="Search" placeholder="Search"><ui-icon name="bubble" style="width:26px;height:26px"></ui-icon></label>
<task-button label="Task view"><ui-icon class="big" name="task"></ui-icon></task-button>
<task-button label="Chat"><ui-icon class="big" name="chat"></ui-icon></task-button>
<task-button label="File Explorer"><ui-icon class="big" name="files"></ui-icon></task-button>
<task-button label="Edge" active><ui-icon class="big" name="edge"></ui-icon></task-button>
<task-button label="Store"><ui-icon class="big" name="store"></ui-icon></task-button>
<task-button label="Brave"><ui-icon class="big" name="brave" style="width:30px"></ui-icon></task-button>
<task-button label="Google"><ui-icon class="big" name="goog"></ui-icon></task-button>
<task-button label="Chrome" running><ui-icon class="big" name="chrome"></ui-icon></task-button>
<task-button label="Webex" running><ui-icon class="big" name="webex"></ui-icon></task-button>
<task-button label="PyCharm" running><ui-icon class="big" name="pc"></ui-icon></task-button>
<task-button label="Paint" running><ui-icon class="big" name="paint"></ui-icon></task-button>
<task-button label="Snipping Tool" running><ui-icon class="big" name="snip"></ui-icon></task-button></div>
<div class="right"><icon-button label="Hidden icons"><ui-icon name="chev"></ui-icon></icon-button>
<icon-button label="OneDrive"><ui-icon name="cloud" style="width:22px;height:22px"></ui-icon></icon-button>
<icon-button label="Microphone"><ui-icon name="mic"></ui-icon></icon-button>
<div class="lang text">ENG<br>IN</div>
<icon-button class="thin" label="Network"><ui-icon name="wifi"></ui-icon></icon-button><icon-button class="thin" label="Volume"><ui-icon name="vol"></ui-icon></icon-button><icon-button class="thin" label="Battery"><ui-icon name="batt"></ui-icon></icon-button>
<div class="clock text">18:05<br>16-04-2023</div></div>`);

define('desktop-screen', `<style>:host{display:flex;flex-direction:column;min-height:100vh}</style>
<tab-strip></tab-strip><tool-bar></tool-bar><favorites-bar></favorites-bar><account-page></account-page><task-bar></task-bar>`);
</script>
</body>
</html>
